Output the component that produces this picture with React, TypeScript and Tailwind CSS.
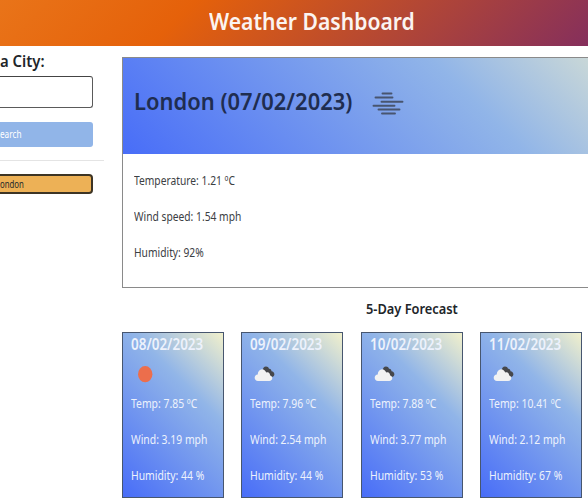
import type { ReactNode } from "react";

function Text({ className, children }: { className: string; children: ReactNode }) {
  return <span className={`block w-max origin-left whitespace-nowrap ${className}`}>{children}</span>;
}

function MistIcon() {
  return (
    <svg className="h-6 w-8" viewBox="0 0 32 24" stroke="#48556f" strokeWidth="1.9" strokeLinecap="round">
      <path d="M10.500 2.500h9M3.500 6.500h17M9.500 10.700h21M1.500 14.700h21M6.500 18.500h21M10 22.500h13" />
    </svg>
  );
}

function SunIcon() {
  return (
    <svg className="h-5 w-[22px]" viewBox="0 0 22 20">
      <ellipse cx="10.200" cy="10.200" rx="7.200" ry="8.100" fill="#ec6e4c" />
    </svg>
  );
}

function CloudIcon() {
  return (
    <svg className="h-5 w-[22px]" viewBox="0 0 22 20">
      <path
        d="M8.500 7C8.500 4.500 10 2.600 12 2.600c1.500 0 2.500.8 3 2.200 1.500-.2 2.400.8 2.500 2.500 1.700.1 2.900 1.500 2.900 3 0 1.600-1.200 2.700-2.800 2.700z"
        fill="#46474b"
      />
      <path
        d="M4 17C2 17 .7 15.700.7 13.800c0-1.800 1.200-3.100 3-3.300C4 7.300 5.700 5.200 8 5.200c2 0 3.500 1.300 4.200 3.400.4-.3.900-.4 1.400-.4 1.500 0 2.500 1.400 2.500 3.200 1.300.2 2.200 1.300 2.200 2.700 0 1.700-1.200 2.900-3 2.900z"
        fill="#f2f2f2"
      />
    </svg>
  );
}

const days = [
  { date: "08/02/2023", temp: "7.85", wind: "3.19", humidity: "44", sunny: true },
  { date: "09/02/2023", temp: "7.96", wind: "2.54", humidity: "44", sunny: false },
  { date: "10/02/2023", temp: "7.88", wind: "3.77", humidity: "53", sunny: false },
  { date: "11/02/2023", temp: "10.41", wind: "2.12", humidity: "67", sunny: false },
];

export default function App() {
  return (
    <div className="h-[500px] w-[588px] overflow-hidden bg-white font-['Noto_Sans',sans-serif] text-[#212529]">
      <header className="flex h-[46px] bg-[linear-gradient(135deg,#e97419_0%,#e5610a_31%,#852f5c_100%)] pt-[4px] pl-[209px]">
        <Text className="scale-x-[0.88] text-2xl leading-[34px] font-semibold text-[#fbf4f1]">Weather Dashboard</Text>
      </header>
      <div className="flex">
        <aside className="w-[122px] shrink-0">
          <Text className="mt-1 scale-x-[0.93] text-base leading-[23px] font-semibold">a City:</Text>
          <div className="mt-[3px] h-8 w-[93px] rounded-r-[3px] border border-l-0 border-[#5a5a5a] border-t-[#444]" />
          <button className="mt-[14px] flex h-[25px] w-[93px] items-center rounded-r-[3px] bg-[#91b5e8]">
            <Text className="scale-x-[0.82] text-[10px] text-white">earch</Text>
          </button>
          <hr className="mt-[13px] w-[104px] border-[#e4e4e4]" />
          <button className="mt-[13px] flex h-5 w-[93px] items-center rounded-r-[4px] border-2 border-l-0 border-[#3d3424] bg-[#edb156]">
            <Text className="scale-x-[0.78] text-[10px]">ondon</Text>
          </button>
        </aside>
        <main className="w-[580px] shrink-0 pt-[11px]">
          <section className="h-[231px] border border-[#8a8a8a]">
            <div className="flex h-24 bg-[linear-gradient(45deg,#486df8_0%,#91b5e8_60%,#f1f0cc_100%)] pt-[25px] pl-[11px]">
              <div className="w-[238px]">
                <Text className="scale-x-[0.913] text-2xl leading-[36px] font-semibold text-[#1f2d50]">London (07/02/2023)</Text>
              </div>
              <div className="pt-[8px]">
                <MistIcon />
              </div>
            </div>
            <div className="flex flex-col gap-4 pt-[17px] pl-[11px] text-xs leading-5 text-[#3c4043]">
              <Text className="scale-x-[0.855]">Temperature: 1.21 ºC</Text>
              <Text className="scale-x-[0.855]">Wind speed: 1.54 mph</Text>
              <Text className="scale-x-[0.855]">Humidity: 92%</Text>
            </div>
          </section>
          <div className="mt-[9px] pl-[244px]">
            <Text className="scale-x-[0.855] text-[15px] leading-[22px] font-semibold">5-Day Forecast</Text>
          </div>
          <div className="mt-[13px] flex gap-[17.400px]">
            {days.map((day) => (
              <article
                key={day.date}
                className="h-[166px] w-[102px] border border-[#47566f] bg-[linear-gradient(45deg,#486df8_0%,#91b5e8_66%,#f1f0cc_100%)] pl-2 text-xs leading-5 text-[#edf2fc]"
              >
                <Text className="scale-x-[0.84] text-base leading-[22px] font-semibold">{day.date}</Text>
                <div className="mt-[9px] pl-1">{day.sunny ? <SunIcon /> : <CloudIcon />}</div>
                <div className="mt-[10px] flex flex-col gap-4">
                  <Text className="scale-x-[0.865]">Temp: {day.temp} ºC</Text>
                  <Text className="scale-x-[0.865]">Wind: {day.wind} mph</Text>
                  <Text className="scale-x-[0.865]">Humidity: {day.humidity} %</Text>
                </div>
              </article>
            ))}
          </div>
        </main>
      </div>
    </div>
  );
}
